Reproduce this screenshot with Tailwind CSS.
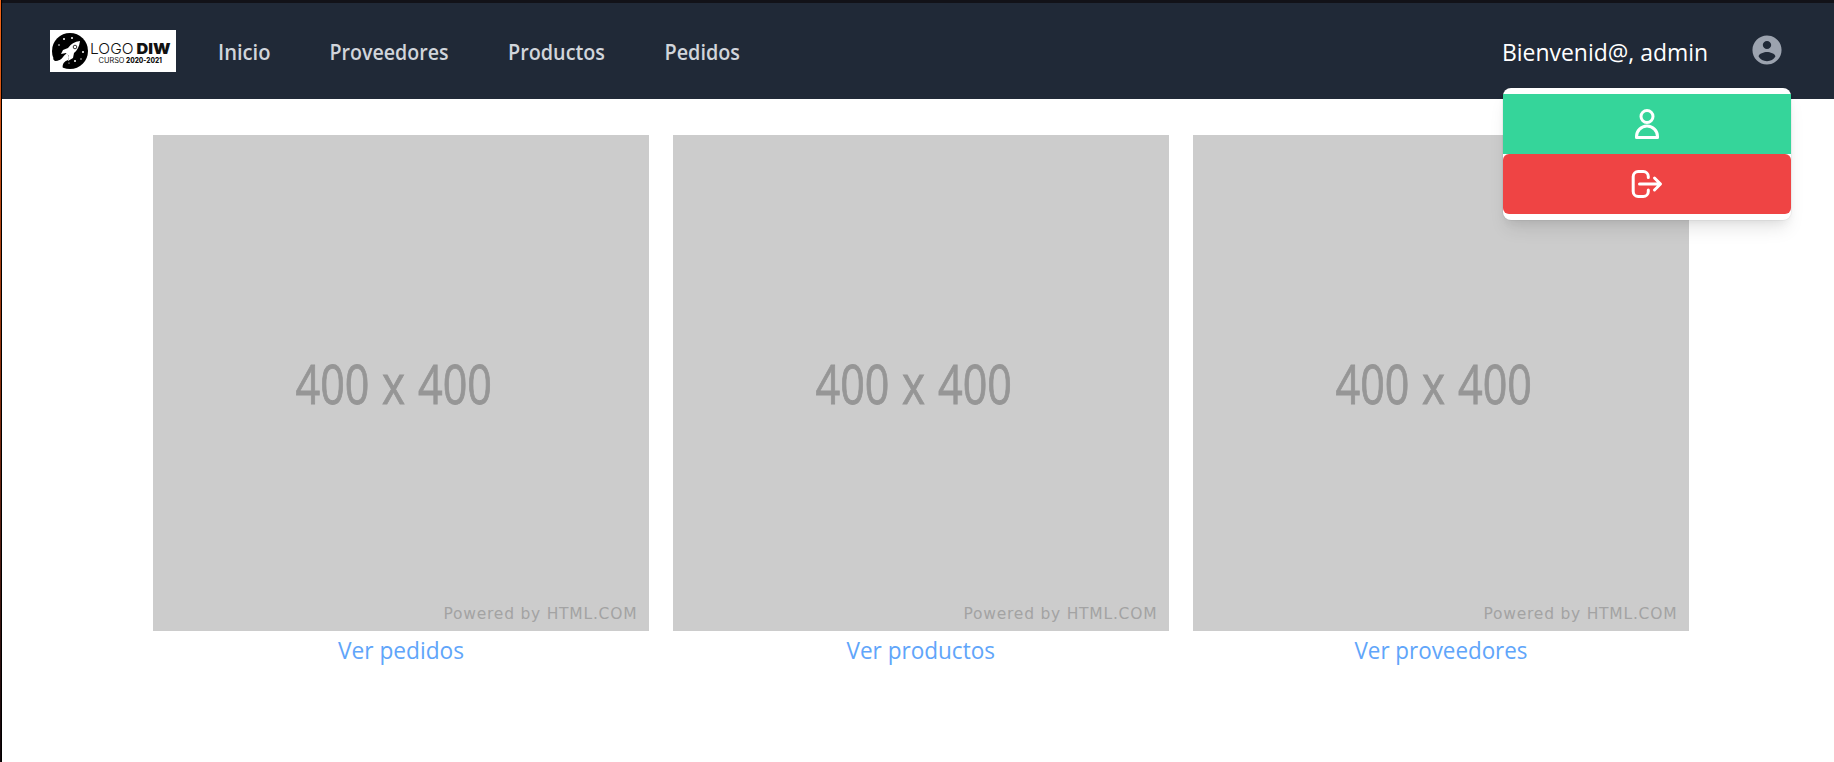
<!DOCTYPE html>
<html lang="es">
<head>
<meta charset="utf-8">
<title>Inicio</title>
<script src="https://cdn.jsdelivr.net/npm/@tailwindcss/browser@4"></script>
</head>
<body class="h-[762px] w-[1834px] overflow-hidden bg-white font-['Open_Sans',sans-serif]">
<div class="flex h-full">
  <div class="w-px shrink-0 bg-linear-to-b from-[#f0641a] via-[#8a2f0c] via-50% to-[#12060a]"></div>
  <div class="w-px shrink-0 bg-black"></div>
  <div class="flex min-w-0 grow flex-col">
    <header class="flex h-[99px] shrink-0 items-start border-t-[3px] border-[#121218] bg-[#202937] pl-12">
      <svg class="mt-[27px] h-[42px] w-[126px] bg-white" viewBox="0 0 126 42">
        <circle cx="20" cy="21" r="18" fill="#000"/>
        <path d="M0 31L6 30.500Q11 30 12.500 27L17 23L19 27L18 30Q12 32 12.500 38L10 42L0 42Z" fill="#fff"/>
        <path d="M3 29Q9 21 17 19L13 27Q10 31 5 31Z" fill="#000"/>
        <path d="M30 11Q22 12 18 18L13 20L11 24L16 23L19 26L18 31L23 28L24 23Q29 19 30 11Z" fill="#fff"/>
        <circle cx="25" cy="17" r="1.800" fill="#fff" stroke="#000" stroke-width=".8"/>
        <g fill="#fff"><circle cx="14" cy="9" r="1"/><circle cx="22" cy="8" r="1"/><circle cx="9" cy="15" r=".8"/><circle cx="33" cy="22" r="1"/><circle cx="25" cy="31" r="1"/><circle cx="31" cy="29" r=".7"/><circle cx="19" cy="33" r=".6"/></g>
        <g fill="#111" font-family="Inter, sans-serif">
          <text x="40" y="24" font-size="14.500" font-weight="300" textLength="43.500" lengthAdjust="spacingAndGlyphs">LOGO</text>
          <text x="86.500" y="24" font-size="14.500" font-weight="900" textLength="34" lengthAdjust="spacingAndGlyphs">DIW</text>
          <text x="48.500" y="33" font-size="7" textLength="26" lengthAdjust="spacingAndGlyphs">CURSO</text>
          <text x="76" y="33" font-size="7" font-weight="800" textLength="36" lengthAdjust="spacingAndGlyphs">2020-2021</text>
        </g>
      </svg>
      <nav class="ml-[41px] mt-[34px] text-[#d1d5db]">
        <svg class="h-8 w-[530px]" fill="currentColor" font-size="20.800" font-weight="600">
          <text x="1" y="23" textLength="52.500" lengthAdjust="spacingAndGlyphs">Inicio</text>
          <text x="112.500" y="23" textLength="119" lengthAdjust="spacingAndGlyphs">Proveedores</text>
          <text x="291" y="23" textLength="97" lengthAdjust="spacingAndGlyphs">Productos</text>
          <text x="447.500" y="23" textLength="75.500" lengthAdjust="spacingAndGlyphs">Pedidos</text>
        </svg>
      </nav>
      <div class="relative ml-auto mr-[43px] flex w-[288px] items-start justify-between">
        <svg class="mt-[34px] h-9 w-[210px] overflow-visible" fill="#fff" font-size="24">
          <text x="-1" y="24" textLength="206" lengthAdjust="spacingAndGlyphs">Bienvenid@, admin</text>
        </svg>
        <svg class="mr-1.5 mt-[29px] size-9" viewBox="0 0 24 24" fill="#9ca3af"><path d="M12 2.300C6.640 2.300 2.300 6.640 2.300 12s4.340 9.700 9.700 9.700 9.700-4.340 9.700-9.700S17.360 2.300 12 2.300zm0 3.700c1.530 0 2.800 1.270 2.800 2.700s-1.270 2.700-2.800 2.700-2.800-1.270-2.800-2.700S10.470 6 12 6zm0 13.500c-2.500 0-4.400-1.200-5.600-3.100.030-1.900 3.700-3 5.600-3s5.570 1.100 5.600 3c-1.200 1.900-3.100 3.100-5.600 3.100z"/></svg>
        <div class="absolute left-0 top-[85px] w-[288px] rounded-lg bg-white py-1.5 shadow-[0_12px_18px_-4px_rgba(0,0,0,0.1),0_5px_8px_-2px_rgba(0,0,0,0.05),0_0_0_1px_rgba(0,0,0,0.04)]">
          <a class="flex h-[60px] items-center justify-center bg-[#35d59a]">
            <svg class="size-9" viewBox="0 0 36 36" fill="none" stroke="#fff" stroke-width="3"><circle cx="18" cy="10.500" r="6"/><path d="M7.500 31.500v-1a10.500 10.500 0 0 1 21 0v1z" stroke-linejoin="round"/></svg>
          </a>
          <a class="flex h-[60px] items-center justify-center rounded-md bg-[#ef4444]">
            <svg class="size-9" viewBox="0 0 36 36" fill="none" stroke="#fff" stroke-width="3" stroke-linecap="round" stroke-linejoin="round"><path d="M19.300 11.500V10.500a5 5 0 0 0-5-5H9.200a5 5 0 0 0-5 5v15a5 5 0 0 0 5 5h5.100a5 5 0 0 0 5-5V24M10.500 18H31M25.500 12L31.500 18l-6 6"/></svg>
          </a>
        </div>
      </div>
    </header>
    <main class="flex gap-6 pl-[151px] pt-9">
      <section class="w-[496px]">
        <svg class="block size-[496px] bg-[#ccc]"><g fill="#969696" stroke="#969696" stroke-width=".9" font-size="54.500"><text x="142.500" y="269" textLength="74" lengthAdjust="spacingAndGlyphs">400</text><text x="229" y="269" textLength="23" lengthAdjust="spacingAndGlyphs">x</text><text x="265" y="269" textLength="74" lengthAdjust="spacingAndGlyphs">400</text></g><text x="290.500" y="483.500" fill="#a3a3a3" font-family="DejaVu Sans, sans-serif" font-size="15.500" textLength="193" lengthAdjust="spacing">Powered by HTML.COM</text></svg>
        <svg class="block h-12 w-full" fill="#60a5fa" font-size="24"><text x="185" y="28" textLength="126" lengthAdjust="spacingAndGlyphs">Ver pedidos</text></svg>
      </section>
      <section class="w-[496px]">
        <svg class="block size-[496px] bg-[#ccc]"><g fill="#969696" stroke="#969696" stroke-width=".9" font-size="54.500"><text x="142.500" y="269" textLength="74" lengthAdjust="spacingAndGlyphs">400</text><text x="229" y="269" textLength="23" lengthAdjust="spacingAndGlyphs">x</text><text x="265" y="269" textLength="74" lengthAdjust="spacingAndGlyphs">400</text></g><text x="290.500" y="483.500" fill="#a3a3a3" font-family="DejaVu Sans, sans-serif" font-size="15.500" textLength="193" lengthAdjust="spacing">Powered by HTML.COM</text></svg>
        <svg class="block h-12 w-full" fill="#60a5fa" font-size="24"><text x="173.500" y="28" textLength="148.500" lengthAdjust="spacingAndGlyphs">Ver productos</text></svg>
      </section>
      <section class="w-[496px]">
        <svg class="block size-[496px] bg-[#ccc]"><g fill="#969696" stroke="#969696" stroke-width=".9" font-size="54.500"><text x="142.500" y="269" textLength="74" lengthAdjust="spacingAndGlyphs">400</text><text x="229" y="269" textLength="23" lengthAdjust="spacingAndGlyphs">x</text><text x="265" y="269" textLength="74" lengthAdjust="spacingAndGlyphs">400</text></g><text x="290.500" y="483.500" fill="#a3a3a3" font-family="DejaVu Sans, sans-serif" font-size="15.500" textLength="193" lengthAdjust="spacing">Powered by HTML.COM</text></svg>
        <svg class="block h-12 w-full" fill="#60a5fa" font-size="24"><text x="161.500" y="28" textLength="173" lengthAdjust="spacingAndGlyphs">Ver proveedores</text></svg>
      </section>
    </main>
  </div>
</div>
</body>
</html>
